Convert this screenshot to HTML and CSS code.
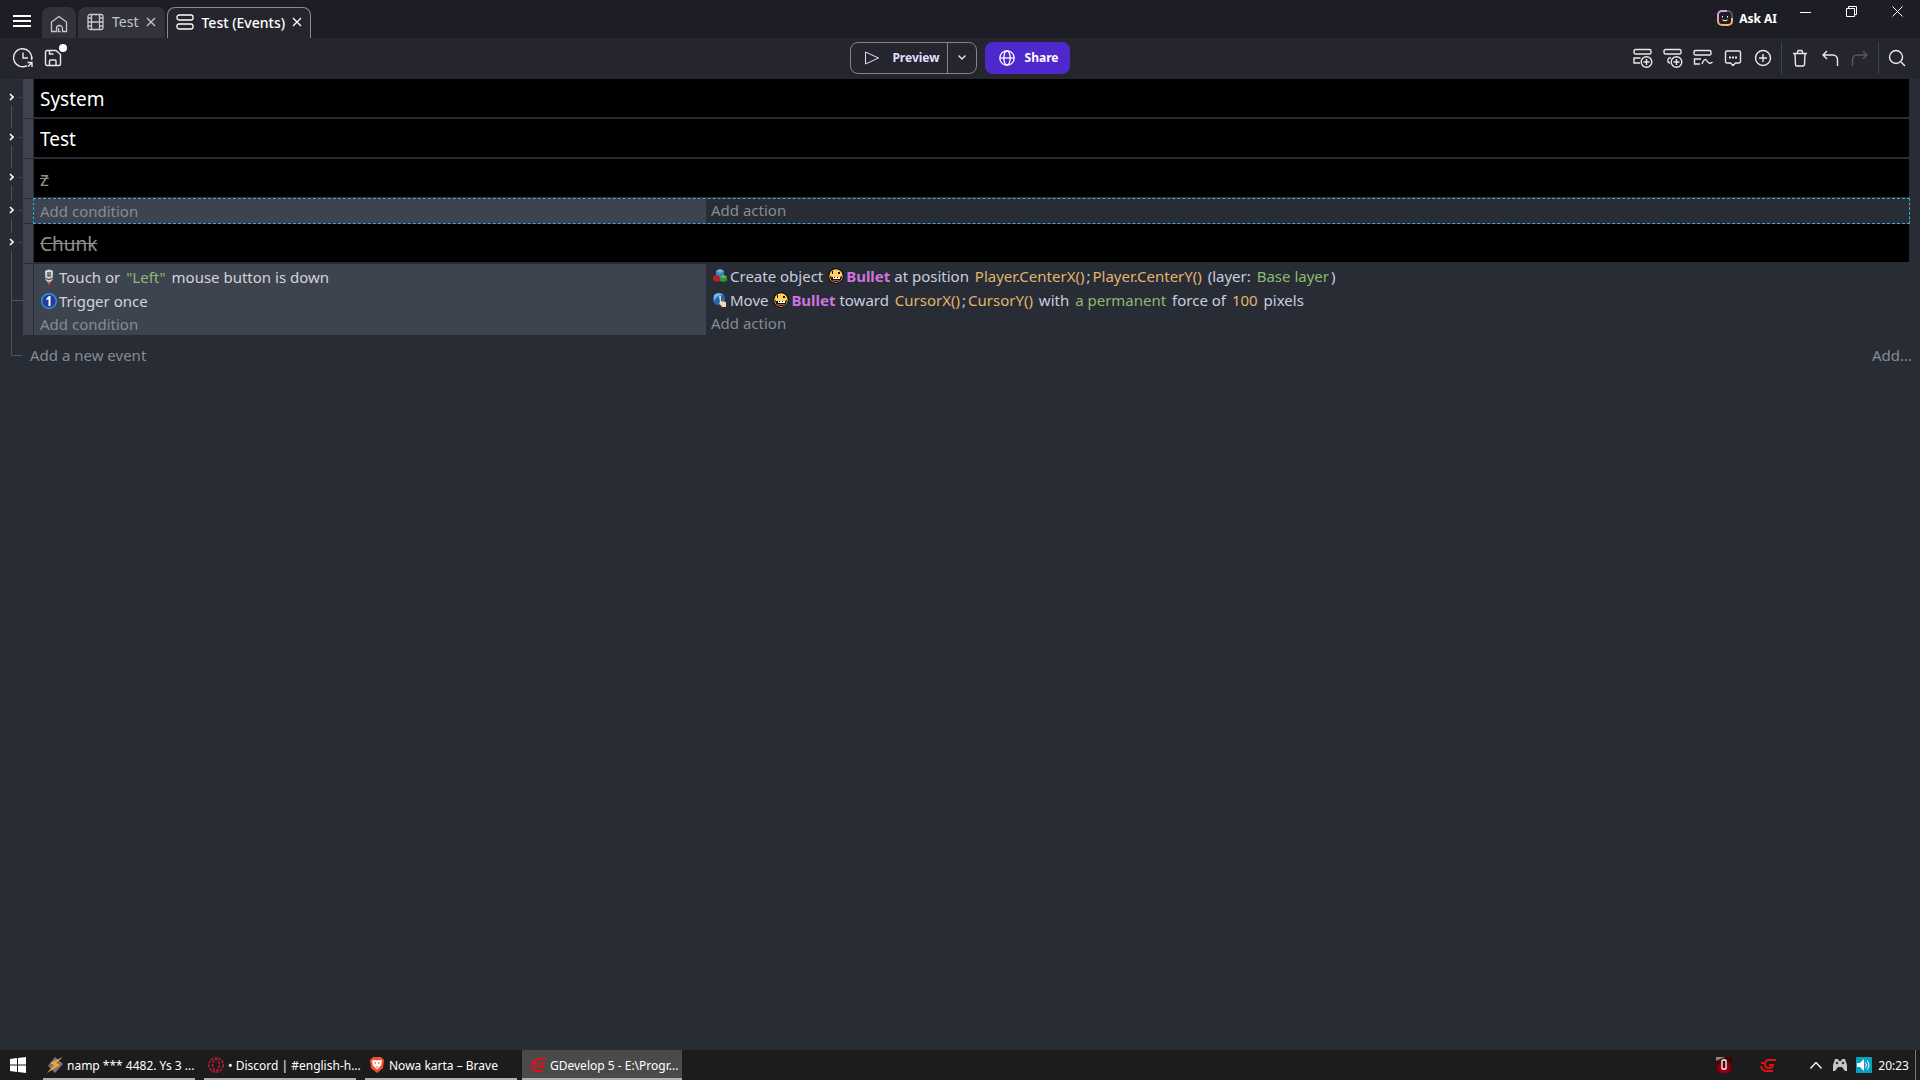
FILE: index.html
```html
<!DOCTYPE html>
<html lang="en">
<head>
<meta charset="utf-8">
<title>GDevelop 5 - Events</title>
<link rel="stylesheet" href="styles.css">
</head>
<body>
<header class="titlebar">
  <button class="menu" aria-label="Menu"><svg width="18" height="14" viewBox="0 0 18 14"><path d="M0 2h18M0 7h18M0 12h18" stroke-width="2"/></svg></button>
  <nav class="tabs">
    <button class="tab tab-home" aria-label="Home"><svg width="18" height="18" viewBox="0 0 18 18"><path d="M1.500 16.500V7L9 1.500 16.500 7v9.500h-4v-3a3 3 0 0 0-6 0v3z"/><path d="M8.500 13v3.500h2"/></svg></button>
    <div class="tab"><svg width="17" height="18" viewBox="0 0 17 18"><rect x="1" y="1.500" width="15" height="15" rx="2"/><path d="M4.500 1.500v15M12.500 1.500v15M4.500 9h8M1 5h3.500M1 9h3.500M1 13h3.500M12.500 5H16M12.500 9H16M12.500 13H16"/></svg><span>Test</span><button class="tab-close" aria-label="Close Test"><svg width="10" height="10" viewBox="0 0 10 10"><path d="M1 1l8 8M9 1L1 9"/></svg></button></div>
    <div class="tab tab-active"><svg width="18" height="18" viewBox="0 0 18 18"><rect x="1" y="2" width="16" height="5" rx="2"/><rect x="1" y="11" width="16" height="5" rx="2"/></svg><span>Test (Events)</span><button class="tab-close" aria-label="Close Test (Events)"><svg width="10" height="10" viewBox="0 0 10 10"><path d="M1 1l8 8M9 1L1 9"/></svg></button></div>
  </nav>
  <button class="ask"><svg width="16" height="16" viewBox="0 0 16 16"><defs><linearGradient id="ai" x1="0" y1="0" x2="0.6" y2="1"><stop offset="0" stop-color="#c9a0f0"/><stop offset=".5" stop-color="#ef9f9a"/><stop offset="1" stop-color="#ffb84a"/></linearGradient></defs><path d="M15 8v3a4 4 0 0 1-4 4H5a4 4 0 0 1-4-4V5a4 4 0 0 1 4-4h5" stroke="url(#ai)" stroke-width="2"/><path d="M10 1h1a4 4 0 0 1 4 4v3" stroke="#5f4a6b" stroke-width="2"/><path d="M5.500 6v1.500M10.500 6v1.500M5.500 10q2.500 1.500 5 0"/></svg>Ask AI</button>
  <div class="window-controls">
    <button aria-label="Minimize"><svg width="11" height="11" viewBox="0 0 11 11"><path d="M0 6.500h11"/></svg></button>
    <button aria-label="Restore"><svg width="11" height="11" viewBox="0 0 11 11"><path d="M.5 2.500h8v8h-8zM2.500 2.500v-2h8v8h-2"/></svg></button>
    <button aria-label="Close"><svg width="11" height="11" viewBox="0 0 11 11"><path d="M.5.5l10 10M10.500.5l-10 10"/></svg></button>
  </div>
</header>

<div class="toolbar">
  <div class="tools tools-left">
    <button aria-label="History"><svg width="20" height="20" viewBox="0 0 20 20"><path d="M18.500 11A9 9 0 1 0 14 17.600M19 8.500A9 9 0 0 1 18.500 12M10 4.500V10h5M14.500 14.500H19v4.500M19 14.500l-4 4"/></svg></button>
    <button class="save" aria-label="Save"><svg width="18" height="18" viewBox="0 0 18 18"><path d="M3 1.500h9l4.500 4V15a1.500 1.500 0 0 1-1.500 1.500H3A1.500 1.500 0 0 1 1.500 15V3A1.500 1.500 0 0 1 3 1.500zM5.500 1.500V5h4M5.500 16.500V12a1 1 0 0 1 1-1H11a1 1 0 0 1 1 1v4.500"/></svg></button>
  </div>
  <div class="main-actions">
    <div class="split">
      <button class="preview"><svg width="16" height="14" viewBox="0 0 16 14"><path d="M1.500 1l13 6-13 6z"/></svg>Preview</button>
      <button class="preview-more" aria-label="Preview options"><svg width="8" height="5" viewBox="0 0 8 5"><path d="M.5.5L4 4 7.500.5" stroke-width="1.400"/></svg></button>
    </div>
    <button class="share"><svg width="16" height="16" viewBox="0 0 16 16"><g stroke-width="1.300"><circle cx="8" cy="8" r="7.200"/><ellipse cx="8" cy="8" rx="3.200" ry="7.200"/><path d="M1 8h14"/></g></svg>Share</button>
  </div>
  <div class="tools tools-right">
    <button aria-label="Add event"><svg width="20" height="20" viewBox="0 0 20 20"><rect x="1" y="1.500" width="17" height="4.500" rx="1.500"/><path d="M7.500 10H1v5h6"/><circle cx="13.500" cy="14" r="5.300"/><path d="M13.500 11v6M10.500 14h6"/></svg></button>
    <button aria-label="Add sub-event"><svg width="20" height="20" viewBox="0 0 20 20"><rect x="1" y="1.500" width="17" height="4.500" rx="1.500"/><path d="M8 10H6a2 2 0 0 0-1 2v1a2 2 0 0 0 2 2"/><circle cx="13.500" cy="14" r="5.300"/><path d="M13.500 11v6M10.500 14h6"/></svg></button>
    <button aria-label="Add other event"><svg width="20" height="20" viewBox="0 0 20 20"><rect x="1" y="2.500" width="17" height="4.500" rx="1.500"/><path d="M8 11H1.500v5H7M9 16q2.500-7 5-3t5.500 1"/></svg></button>
    <button aria-label="Add comment"><svg width="18" height="18" viewBox="0 0 18 18"><path d="M3 2h12a1.500 1.500 0 0 1 1.500 1.500v9A1.500 1.500 0 0 1 15 14h-3.500L9 16.500 6.500 14H3a1.500 1.500 0 0 1-1.500-1.500v-9A1.500 1.500 0 0 1 3 2z"/><path d="M5 8.500h2M8 8.500h2M11 8.500h2" stroke-width="2"/></svg></button>
    <button aria-label="Add"><svg width="18" height="18" viewBox="0 0 18 18"><circle cx="9" cy="9" r="7.500"/><path d="M9 5v8M5 9h8"/></svg></button>
    <span class="divider"></span>
    <button aria-label="Delete"><svg width="16" height="18" viewBox="0 0 16 18"><path d="M1 4.500h14M5.500 4.500V3a1.500 1.500 0 0 1 1.500-1.500h2A1.500 1.500 0 0 1 10.500 3v1.500M3 4.500l.5 11a1.500 1.500 0 0 0 1.500 1.500h6a1.500 1.500 0 0 0 1.500-1.500l.5-11"/></svg></button>
    <button aria-label="Undo"><svg width="18" height="18" viewBox="0 0 18 18"><path d="M6 2L2 6l4 4M2 6h10a4.500 4.500 0 0 1 4.500 4.500V17"/></svg></button>
    <button aria-label="Redo" disabled><svg width="18" height="18" viewBox="0 0 18 18"><path d="M12 2l4 4-4 4M16 6H6a4.500 4.500 0 0 0-4.500 4.500V17"/></svg></button>
    <span class="divider"></span>
    <button aria-label="Search"><svg width="18" height="18" viewBox="0 0 18 18"><circle cx="8" cy="8" r="6.500"/><path d="M13 13l4 4"/></svg></button>
  </div>
</div>

<main class="sheet">
  <div class="row first">
    <div class="tree"><button aria-label="Expand System"><svg width="5" height="8" viewBox="0 0 5 8"><path d="M1 1l3 3-3 3"/></svg></button></div>
    <div class="handle"></div><div class="comment">System</div>
  </div>
  <div class="row">
    <div class="tree"><button aria-label="Expand Test"><svg width="5" height="8" viewBox="0 0 5 8"><path d="M1 1l3 3-3 3"/></svg></button></div>
    <div class="handle"></div><div class="comment">Test</div>
  </div>
  <div class="row">
    <div class="tree"><button aria-label="Expand z"><svg width="5" height="8" viewBox="0 0 5 8"><path d="M1 1l3 3-3 3"/></svg></button></div>
    <div class="handle"></div><div class="comment off">z</div>
  </div>
  <div class="row compact">
    <div class="tree"><button aria-label="Expand event"><svg width="5" height="8" viewBox="0 0 5 8"><path d="M1 1l3 3-3 3"/></svg></button></div>
    <div class="handle"></div>
    <div class="event selected">
      <div class="conditions"><button class="add">Add condition</button></div>
      <div class="actions"><button class="add">Add action</button></div>
    </div>
  </div>
  <div class="row">
    <div class="tree"><button aria-label="Expand Chunk"><svg width="5" height="8" viewBox="0 0 5 8"><path d="M1 1l3 3-3 3"/></svg></button></div>
    <div class="handle"></div><div class="comment off">Chunk</div>
  </div>
  <div class="row leaf">
    <div class="tree"></div>
    <div class="handle"></div>
    <div class="event">
      <div class="conditions">
        <p class="line"><svg class="ico" width="19" height="16" viewBox="0 0 19 16"><path d="M5 2q4-3 8 0l-.5 9q-3.500 4-7 0z" fill="#d8d8d6"/><path d="M8 3v4h2V3M5.500 9q3.500 3 7 0" fill="none" stroke="#55585c" stroke-width="1.500"/><path d="M7 13h4l-2 3z" fill="#e84b3c"/></svg>Touch or <span class="str">"Left"</span> mouse button is down</p>
        <p class="line"><svg class="ico" width="19" height="16" viewBox="0 0 19 16"><circle cx="9" cy="8" r="7.300" fill="#293b9c" stroke="#2998d8" stroke-width="1.400"/><path d="M6 6l3-3h1.500v10h-2V6L6.500 7z" fill="#fff"/></svg>Trigger once</p>
        <button class="add">Add condition</button>
      </div>
      <div class="actions">
        <p class="line"><svg class="ico" width="19" height="16" viewBox="0 0 19 16"><path d="M5 3l4-2 4 2v5l-4 2-4-2z" fill="#3d82bd"/><path d="M5 3l4-2 4 2-4 2z" fill="#75b4df"/><path d="M2 8l4-1 3 2v4l-4 1-3-2z" fill="#b51f25"/><path d="M9 9l4-2 3 2v4l-4 1-3-1z" fill="#2c9a36"/><path d="M9 9l4-2 3 2-4 1z" fill="#63bd5c"/></svg>Create object <svg class="ico" width="19" height="16" viewBox="0 0 19 16"><circle cx="9" cy="8" r="7.300" fill="#ffd05a" stroke="#15100b" stroke-width="1.200"/><path d="M5 3h1v3H5zM11 4h2v2h-2zM3 8h1v1h10V8h1l-1 4-3 2H7l-3-2z" fill="#201015"/><path d="M6 9h1v1h1V9h2v1h1V9h2v2H6z" fill="#fff"/><path d="M6 12h6v1H6z" fill="#ce3d67"/></svg><b>Bullet</b> at position <span class="num">Player.CenterX()</span>;<span class="num">Player.CenterY()</span> (layer: <span class="str">Base layer</span>)</p>
        <p class="line"><svg class="ico" width="19" height="16" viewBox="0 0 19 16"><circle cx="8" cy="7" r="6.300" fill="#2465af"/><path d="M3 3q5-4 9 0-6 0-9 6z" fill="#70b6e9"/><path d="M8 4h2v5l5 1v5h-4l-3-4 1-1z" fill="#f3d2b5"/></svg>Move <svg class="ico" width="19" height="16" viewBox="0 0 19 16"><circle cx="9" cy="8" r="7.300" fill="#ffd05a" stroke="#15100b" stroke-width="1.200"/><path d="M5 3h1v3H5zM11 4h2v2h-2zM3 8h1v1h10V8h1l-1 4-3 2H7l-3-2z" fill="#201015"/><path d="M6 9h1v1h1V9h2v1h1V9h2v2H6z" fill="#fff"/><path d="M6 12h6v1H6z" fill="#ce3d67"/></svg><b>Bullet</b> toward <span class="num">CursorX()</span>;<span class="num">CursorY()</span> with <span class="str">a permanent</span> force of <span class="num">100</span> pixels</p>
        <button class="add">Add action</button>
      </div>
    </div>
  </div>
  <div class="new-event"><span class="elbow"></span><button class="add">Add a new event</button><button class="add">Add...</button></div>
</main>

<footer class="taskbar">
  <button class="start" aria-label="Start"><svg width="16" height="16" viewBox="0 0 16 16"><path d="M0 2l7-1v6.500H0zM8 1l8-1v7.500H8zM0 8.500h7V15l-7-1zM8 8.500h8V16l-8-1z" fill="#fff"/></svg></button>
  <button class="task"><svg width="16" height="16" viewBox="0 0 16 16"><path d="M8 0l8 7-8 9-7-7z" fill="#74787a"/><path d="M16 0L3 6l4 2-7 8 13-8-4-2z" fill="#f4a338"/></svg><span>namp *** 4482. Ys 3 ...</span></button>
  <button class="task"><svg width="16" height="16" viewBox="0 0 16 16" fill="none" stroke="#e01840" stroke-width="1.200" stroke-dasharray="3 1"><circle cx="8" cy="8" r="7.200"/><ellipse cx="8" cy="8" rx="3.500" ry="5.500"/></svg><span>• Discord | #english-h...</span></button>
  <button class="task"><svg width="16" height="16" viewBox="0 0 16 16"><path d="M4 0h8l3 3-1 8-6 5-6-5-1-8z" fill="#f5502b"/><path d="M3 3.500l3-.5 2 .5 2-.5 3 .5-1 5-4 4-4-4z" fill="#fff"/><path d="M5 5l2 .5v2zM11 5l-2 .5v2zM6.500 9.500h3L8 11z" fill="#f5502b"/></svg><span>Nowa karta – Brave</span></button>
  <button class="task task-active"><svg width="16" height="16" viewBox="0 0 16 16" fill="none" stroke="#df1117" stroke-width="2"><path d="M16 2H9Q5 2 5 6t4 4q4 0 4-3H9M1 5h3M1 8q1 6 6 6h6"/></svg><span>GDevelop 5 - E:\Progr...</span></button>
  <div class="tray">
    <button class="tray-app" aria-label="Recorder"><svg width="16" height="16" viewBox="0 0 16 16"><defs><radialGradient id="rec" cx=".5" cy=".7" r=".6"><stop offset="0" stop-color="#d00010"/><stop offset="1" stop-color="#3a0508"/></radialGradient></defs><rect width="16" height="16" rx="1" fill="url(#rec)"/><path d="M0 0h9L0 4z" fill="#8e8585"/><rect x="6" y="3" width="4" height="9" rx="1" fill="#43060b" stroke="#fff" stroke-width="1.300"/></svg></button>
    <button class="tray-app" aria-label="GDevelop"><svg width="16" height="16" viewBox="0 0 16 16" fill="none" stroke="#df1117" stroke-width="2"><path d="M16 3H9Q5 3 5 7t4 4q4 0 4-3H9M1 6h3M1 9q1 5 6 5h6"/></svg></button>
    <button class="tray-more" aria-label="Show hidden icons"><svg width="12" height="7" viewBox="0 0 12 7"><path d="M.5 6.500l5.500-6 5.500 6" fill="none" stroke="#fff" stroke-width="1.300"/></svg></button>
    <button aria-label="Controller"><svg width="16" height="14" viewBox="0 0 16 14"><path d="M3 1h3l1 2h2l1-2h3l2 6v6h-2l-3-4H6l-3 4H1V7z" fill="#c3c6c8"/><circle cx="5" cy="5" r="1.300" fill="#33373a"/><circle cx="11" cy="5" r="1.300" fill="#33373a"/></svg></button>
    <button aria-label="Volume"><svg width="16" height="16" viewBox="0 0 16 16"><rect width="16" height="16" rx="1" fill="#0b9fc0"/><path d="M1 6h3l4-4v12l-4-4H1z" fill="#fff"/><path d="M9.500 5.500q2 2.500 0 5M11 3.500q4 4.500 0 9" fill="none" stroke="#fff"/></svg></button>
    <time>20:23</time>
    <span class="desktop-edge"></span>
  </div>
</footer>
</body>
</html>
```
FILE: styles.css
```css
* { box-sizing: border-box; }
body {
  margin: 0;
  min-height: 100vh;
  display: flex;
  flex-direction: column;
  background: #282c34;
  color: #d4d4d6;
  font-family: "Noto Sans", sans-serif;
  font-size: 15px;
}
button {
  margin: 0;
  padding: 0;
  border: 0;
  background: none;
  color: inherit;
  font: inherit;
  display: flex;
  align-items: center;
  justify-content: center;
}
svg { flex: none; }
p { margin: 0; }

.titlebar { display: flex; height: 38px; background: #1d1d26; }
.titlebar svg, .toolbar svg { fill: none; stroke: currentColor; }
.menu { width: 42px; color: #fff; padding: 4px 0 0 2px; }
.tabs { display: flex; gap: 2px; padding-top: 7px; flex: 1; }
.tab {
  display: flex;
  align-items: center;
  gap: 8px;
  padding: 0 9px 2px;
  border-radius: 8px 8px 0 0;
  background: #32323b;
  color: #c6c6cc;
  font-size: 14px;
}
.tab-home { padding: 2px 8px 0; }
.tab svg { stroke-width: 1.3; }
.tab-active {
  gap: 7px;
  padding: 0 8px 2px;
  background: #25252e;
  border: 1px solid #8a8a94;
  border-bottom: 0;
  color: #fff;
  font-weight: 500;
}
.tab-close { width: 10px; }
.ask { gap: 6px; margin: 0 5px; padding-bottom: 2px; color: #fff; font-size: 12px; font-weight: 700; }
.window-controls { display: flex; height: 22px; color: #fff; }
.window-controls button { width: 46px; }

.toolbar {
  display: grid;
  grid-template-columns: 1fr auto 1fr;
  align-items: center;
  height: 41px;
  padding-bottom: 2px;
  background: #25252e;
  color: #e8e8ec;
}
.tools { display: flex; align-items: center; padding: 0 8px; }
.tools button { width: 30px; height: 32px; }
.tools svg { stroke-width: 1.4; }
.tools-right { justify-content: flex-end; }
.tools button:disabled { color: #57575f; }
.save { position: relative; }
.save::after {
  content: "";
  position: absolute;
  top: 2px;
  right: 1px;
  width: 8px;
  height: 8px;
  border-radius: 50%;
  background: #fff;
}
.divider { width: 1px; height: 32px; margin: 0 3px; background: #3c4250; }
.main-actions { display: flex; gap: 8px; font-size: 12px; font-weight: 700; color: #e4defc; }
.split { display: flex; height: 32px; border: 1px solid #83838f; border-radius: 8px; }
.preview { width: 96px; gap: 12px; padding-left: 6px; }
.preview-more { width: 29px; border-left: 1px solid #83838f; }
.share { width: 85px; gap: 10px; padding-left: 2px; border-radius: 8px; background: #4f28cd; color: #fff; }

.sheet { flex: 1; }
.row { display: flex; min-height: 40px; }
.tree { width: 23px; flex: none; display: flex; flex-direction: column; color: #4c515b; }
.tree::before, .tree::after { content: ""; width: 1px; margin-left: 11px; background: currentColor; }
.tree::before { height: 9px; }
.tree::after { flex: 1; }
.first .tree::before { background: none; }
.tree button { height: 18px; gap: 5px; padding-left: 9px; justify-content: flex-start; }
.tree button::after { content: ""; width: 3px; height: 1px; background: #4c515b; }
.tree svg { fill: none; stroke: #fff; stroke-width: 1.6; }
.compact { min-height: 25px; }
.compact .tree::before { height: 2px; }
.leaf .tree::before { height: 36px; width: 11px; background: none; border-left: 1px solid; border-bottom: 1px solid; }
.handle { width: 10px; margin: 0 1px 1px 0; flex: none; background: #3f4450; }
.comment {
  flex: 1;
  margin: 0 11px 2px 0;
  padding: 3px 6px 0;
  background: #000;
  color: #fff;
  font-size: 19px;
  line-height: 35px;
}
.off { color: #8f8f8f; text-decoration: line-through; }
.event { flex: 1; display: grid; grid-template-columns: 672px 1fr; margin: 0 11px 1px 0; min-width: 0; }
.selected { outline: 1px dashed #36a9e0; }
.conditions { background: #3e4350; padding: 1px 6px 0; }
.actions { padding: 0 5px 1px; color: #c8cee0; }
.line { display: flex; align-items: center; height: 24px; white-space: pre; }
.add { color: #868b95; line-height: 22px; }
.str { padding: 0 2px; color: #8dba70; }
.num { padding: 0 2px; color: #e0b56c; }
.line b { color: #cd74e0; }
.new-event { display: flex; align-items: flex-start; padding-right: 8px; }
.new-event .add { line-height: 24px; margin-top: 7px; }
.new-event .add:last-child { margin-left: auto; }
.elbow { width: 11px; height: 20px; margin: 0 8px 0 11px; border-left: 1px solid #4c515b; border-bottom: 1px solid #4c515b; }

.taskbar { display: flex; height: 30px; gap: 1px; background: #1c1c1c; color: #fff; font-size: 12px; }
.start { width: 38px; padding-left: 10px; justify-content: flex-start; }
.task { width: 160px; padding: 0 8px; gap: 4px; justify-content: flex-start; white-space: nowrap; position: relative; }
.task::after { content: ""; position: absolute; left: 4px; right: 4px; bottom: 0; height: 2px; background: #b0b0b0; }
.task-active { background: #4a4a4a; }
.task-active::after { left: 0; right: 0; }
.tray { display: flex; align-items: center; margin-left: auto; }
.tray button { width: 24px; height: 30px; }
.tray .tray-app { width: 44px; }
.tray .tray-more { margin-left: 14px; }
.tray time { margin: 0 6px 0 2px; }
.desktop-edge { width: 5px; height: 30px; border-left: 1px solid #777; }
```
